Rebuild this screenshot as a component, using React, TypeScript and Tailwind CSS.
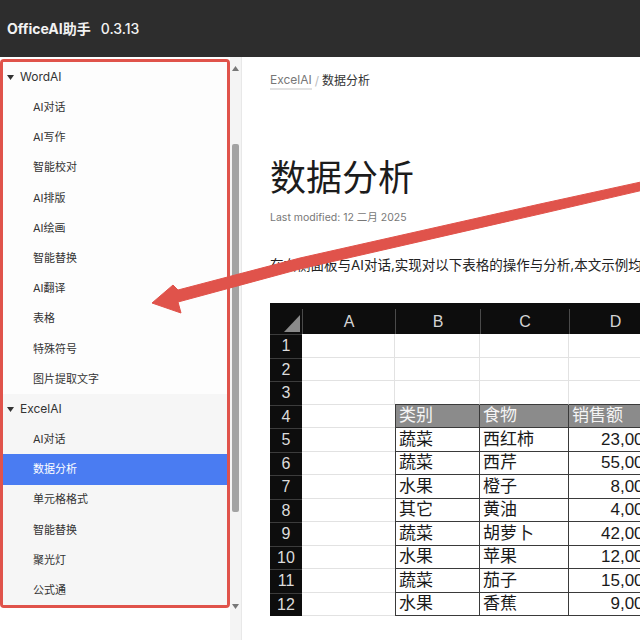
import React from 'react';

type NavItem = { label: string; active?: boolean };
type NavGroup = { title: string; items: NavItem[]; shaded?: boolean };

const groups: NavGroup[] = [
  {
    title: 'WordAI',
    items: [
      { label: 'AI对话' },
      { label: 'AI写作' },
      { label: '智能校对' },
      { label: 'AI排版' },
      { label: 'AI绘画' },
      { label: '智能替换' },
      { label: 'AI翻译' },
      { label: '表格' },
      { label: '特殊符号' },
      { label: '图片提取文字' },
    ],
  },
  {
    title: 'ExcelAI',
    shaded: true,
    items: [
      { label: 'AI对话' },
      { label: '数据分析', active: true },
      { label: '单元格格式' },
      { label: '智能替换' },
      { label: '聚光灯' },
      { label: '公式通' },
    ],
  },
];

const rows: string[][] = [
  ['', '', ''],
  ['', '', ''],
  ['', '', ''],
  ['类别', '食物', '销售额'],
  ['蔬菜', '西红柿', '23,000'],
  ['蔬菜', '西芹', '55,000'],
  ['水果', '橙子', '8,000'],
  ['其它', '黄油', '4,000'],
  ['蔬菜', '胡萝卜', '42,000'],
  ['水果', '苹果', '12,000'],
  ['蔬菜', '茄子', '15,000'],
  ['水果', '香蕉', '9,000'],
];

const Caret = () => (
  <svg width="7" height="5" viewBox="0 0 7 5" className="shrink-0">
    <path d="M0 0 L7 0 L3.5 5 Z" fill="#333" />
  </svg>
);

const Sidebar = () => (
  <aside className="w-[242px] shrink-0 border-r border-[#e8e8e8] flex">
    <div className="w-[230px] pt-[2px]">
      <div className="border-[3px] border-[#e0534b] rounded-[4px] overflow-hidden">
        {groups.map((g) => (
          <div key={g.title} className={g.shaded ? 'bg-[#f6f6f6]' : 'bg-[#fdfdfd]'}>
            <div className="h-[30.2px] flex items-center pl-[4px] gap-[6px] text-[12px] text-[#333]">
              <Caret />
              <span>{g.title}</span>
            </div>
            {g.items.map((it, i) => (
              <div
                key={i}
                className={`h-[30.2px] flex items-center pl-[30px] text-[11px] ${
                  it.active ? 'bg-[#4a7cf2] text-white' : 'text-[#333]'
                }`}
              >
                {it.label}
              </div>
            ))}
          </div>
        ))}
      </div>
    </div>
    {/* scrollbar */}
    <div className="w-[11px] bg-[#f4f4f4] flex flex-col items-center">
      <svg width="7" height="5" viewBox="0 0 7 5" className="mt-[9px]">
        <path d="M0 5 L7 5 L3.5 0 Z" fill="#777" />
      </svg>
      <div className="mt-[73px] w-[7px] h-[368px] bg-[#a3a3a3] rounded-[2px]" />
      <svg width="7" height="5" viewBox="0 0 7 5" className="mt-[92px]">
        <path d="M0 0 L7 0 L3.5 5 Z" fill="#777" />
      </svg>
    </div>
  </aside>
);

const colW = ['w-[93px]', 'w-[85px]', 'w-[89px]', 'w-[92px]'];

const Sheet = () => (
  <div className="font-['Liberation_Sans','Noto_Sans_CJK_SC',sans-serif] w-[391px]">
    <div className="flex h-[31px] bg-[#0d0d0d] text-[#d4d4d4] text-[16px]">
      <div className="w-[32px] relative">
        <svg width="32" height="31" viewBox="0 0 32 31" className="absolute inset-0">
          <path d="M14 29 L30 29 L30 12 Z" fill="#8a8a8a" />
        </svg>
      </div>
      {['A', 'B', 'C', 'D'].map((c, i) => (
        <div key={c} className={`${colW[i]} border-l border-[#4a4a4a] mt-[6px] flex items-center justify-center leading-[20px]`}>
          {c}
        </div>
      ))}
    </div>
    {rows.map((r, ri) => {
      const n = ri + 1;
      const inBlock = n >= 4;
      return (
        <div key={ri} className="flex h-[23.5px]">
          <div className="w-[32px] bg-[#0d0d0d] border-t border-[#3c3c3c] text-[#dcdcdc] text-[16px] flex items-center justify-center">
            {n}
          </div>
          <div className={`w-[93px] border-b border-[#e2e2e2] ${inBlock ? '' : 'border-r'}`} />
          {r.map((v, ci) => {
            const isHead = n === 4;
            const base = inBlock
              ? `border-r border-b border-[#3a3a3a] ${ci === 0 ? 'border-l' : ''}`
              : n === 3
                ? 'border-r border-b border-r-[#e2e2e2] border-b-[#3a3a3a]'
                : 'border-r border-b border-[#e2e2e2]';
            return (
              <div
                key={ci}
                className={`${colW[ci + 1]} ${base} flex items-center text-[17px] leading-none whitespace-nowrap ${
                  isHead ? 'bg-[#8b8b8b] text-[#f4f4f4] pl-[3px]' : 'text-[#1a1a1a]'
                } ${!isHead && ci === 2 ? 'justify-end pr-[7px]' : 'pl-[3px]'}`}
              >
                {v}
              </div>
            );
          })}
        </div>
      );
    })}
  </div>
);

export default function App() {
  return (
    <div className="relative w-[640px] h-[640px] overflow-hidden bg-white font-[Inter,'Noto_Sans_CJK_SC',sans-serif]">
      <header className="h-[57px] bg-[#2d2d2d] flex items-center pl-[7px] text-[14px] text-[#f2f2f2]">
        <span className="font-bold">OfficeAI助手</span>
        <span className="ml-[10px] font-medium">0.3.13</span>
      </header>
      <div className="flex h-[583px]">
        <Sidebar />
        <main className="flex-1 pl-[28px] overflow-hidden">
          <div className="mt-[16px] h-[16px] flex items-center text-[12px] leading-[16px]">
            <span className="text-[#777] border-b-2 border-[#e2e2e2]">ExcelAI</span>
            <span className="text-[#bbb] mx-[3px]">/</span>
            <span className="text-[#333]">数据分析</span>
          </div>
          <h1 className="mt-[67px] h-[44px] text-[36px] leading-[44px] font-normal text-[#1c1c1c]">数据分析</h1>
          <div className="mt-[11px] text-[10.5px] leading-[14px] text-[#777]">Last modified: 12 二月 2025</div>
          <p className="mt-[32px] text-[13.5px] leading-[16px] text-[#222] whitespace-nowrap">
            在右侧面板与AI对话,实现对以下表格的操作与分析,本文示例均由AI完成
          </p>
          <div className="mt-[30px]">
            <Sheet />
          </div>
        </main>
      </div>
      <svg width="640" height="640" viewBox="0 0 640 640" className="absolute inset-0 pointer-events-none">
        <polygon
          points="152,303 173,285 178,290 300,258 540,204 650,180 650,188.5 540,214 300,269 178,302 181,313"
          fill="#e0534b"
          stroke="#e0534b"
          strokeWidth="1"
          strokeLinejoin="round"
        />
      </svg>
    </div>
  );
}
